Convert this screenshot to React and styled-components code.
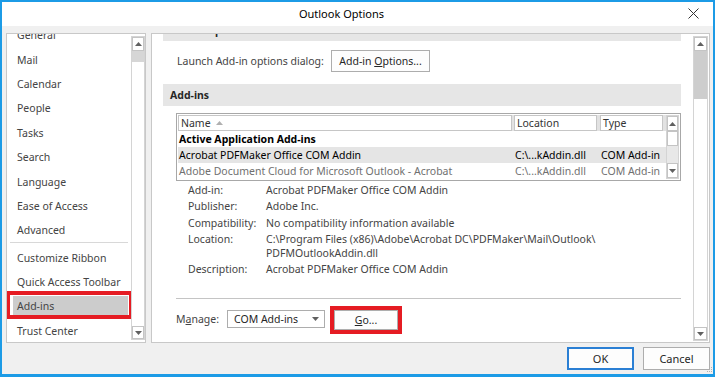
import React from 'react';
import styled, { createGlobalStyle } from 'styled-components';

const FONT = `"Noto Sans", "Segoe UI", sans-serif`;

const GlobalStyle = createGlobalStyle`
  html, body {
    margin: 0;
    padding: 0;
    background: #ffffff;
  }
  body {
    font-family: ${FONT};
    font-size: 10.5px;
    color: #444444;
  }
  * {
    box-sizing: border-box;
  }
`;

const Window = styled.div`
  width: 715px;
  height: 377px;
  border: 2px solid #1c9be6;
  border-bottom-width: 3px;
  background: #f0f0f0;
  display: flex;
  flex-direction: column;
  overflow: hidden;
`;

const TitleBar = styled.div`
  height: 24px;
  flex: none;
  background: #ffffff;
  display: flex;
  align-items: center;
  padding-bottom: 2px;
`;

const Title = styled.div`
  flex: 1;
  text-align: center;
  color: #000000;
  font-size: 11px;
`;

const CloseButton = styled.div`
  width: 32px;
  height: 22px;
  display: flex;
  align-items: center;
  padding-left: 7px;
`;

const Body = styled.div`
  flex: 1;
  display: flex;
  flex-direction: column;
  padding: 7px 0 0 4px;
`;

const Main = styled.div`
  height: 310px;
  margin-right: 3px;
  display: flex;
  gap: 5px;
`;

/* ---------- scrollbars ---------- */

const ScrollBar = styled.div`
  width: ${(p) => p.$w}px;
  flex: none;
  display: flex;
  flex-direction: column;
  background: ${(p) => p.$track};
  border: 1px solid #d4d4d4;
  margin: ${(p) => p.$m};
`;

const ScrollButton = styled.div`
  height: ${(p) => p.$h}px;
  flex: none;
  background: #ffffff;
  border: 1px solid #c4c4c4;
  display: flex;
  align-items: center;
  justify-content: center;
`;

const ScrollThumb = styled.div`
  height: ${(p) => p.$h}px;
  flex: none;
  background: ${(p) => p.$bg};
  border: ${(p) => (p.$bordered ? '1px solid #c4c4c4' : 'none')};
`;

const ScrollSpacer = styled.div`
  flex: 1;
`;

const Arrow = ({ down, color = '#606060' }) => (
  <svg width="7" height="4" viewBox="0 0 7 4">
    <polygon points={down ? '0,0 7,0 3.5,4' : '0,4 7,4 3.5,0'} fill={color} />
  </svg>
);

/* ---------- left navigation ---------- */

const NavPanel = styled.div`
  width: 140px;
  flex: none;
  border: 1px solid #c8c8c8;
  background: #ffffff;
  display: flex;
`;

const NavList = styled.div`
  flex: 1;
  overflow: hidden;
  padding: 0 0 0 1px;
`;

const NavInner = styled.div`
  margin-top: -12.5px;
`;

const NavItem = styled.div`
  height: 24.4px;
  padding: 3px 3px 0 5px;
  display: flex;
  outline: ${(p) => (p.$marked ? '4px solid #e51c23' : 'none')};
  outline-offset: -2px;
`;

const NavLabel = styled.div`
  flex: 1;
  display: flex;
  align-items: center;
  padding-left: 4px;
  color: #444444;
  background: ${(p) => (p.$active ? '#cccccc' : 'transparent')};
`;

const NavSeparator = styled.div`
  height: 1px;
  margin: 1px 3px 1px 2px;
  background: #d8d8d8;
`;

/* ---------- right content ---------- */

const ContentPanel = styled.div`
  flex: 1;
  border: 1px solid #c8c8c8;
  background: #ffffff;
  display: flex;
`;

const Content = styled.div`
  flex: 1;
  overflow: hidden;
  padding: 0 12px 0 11px;
  display: flex;
  flex-direction: column;
`;

const SectionHeader = styled.div`
  height: 22px;
  flex: none;
  background: #e6e6e6;
  display: flex;
  align-items: center;
  padding-left: 7px;
  font-weight: 700;
  color: #262626;
  margin-top: ${(p) => p.$top}px;
`;

const LaunchRow = styled.div`
  margin-top: 9px;
  padding-left: 14px;
  height: 22px;
  display: flex;
  align-items: center;
`;

const Label = styled.span`
  width: ${(p) => p.$w}px;
  flex: none;
`;

const Button = styled.div`
  width: ${(p) => p.$w}px;
  height: ${(p) => p.$h}px;
  flex: none;
  background: #fdfdfd;
  border: ${(p) => (p.$primary ? '2px solid #2a7fd4' : '1px solid #adadad')};
  display: flex;
  align-items: center;
  justify-content: center;
  color: #262626;
  font-size: ${(p) => p.$fs || '10.5px'};
  outline: ${(p) => (p.$marked ? '4px solid #e51c23' : 'none')};
`;

const ListView = styled.div`
  margin: 7px 0 0 13px;
  height: 68px;
  flex: none;
  border: 1px solid #a8a8a8;
  padding: 1px;
  background: #ffffff;
  display: flex;
`;

const ListMain = styled.div`
  flex: 1;
  display: flex;
  flex-direction: column;
`;

const Row = styled.div`
  display: grid;
  grid-template-columns: 336px 86px 65px;
  height: 16px;
  align-items: center;
  background: ${(p) => (p.$selected ? '#e5e5e5' : p.$head ? '#e2e2e2' : 'transparent')};
  color: ${(p) => p.$color || '#000000'};
  font-weight: ${(p) => (p.$bold ? 700 : 400)};
`;

const HeadCell = styled.div`
  height: 16px;
  margin-right: ${(p) => p.$gap}px;
  background: #ffffff;
  border: 1px solid #c6c6c6;
  display: flex;
  align-items: center;
  padding-left: 2px;
  color: #333333;
  gap: 5px;
`;

const Cell = styled.div`
  padding-left: 1px;
  white-space: nowrap;
  overflow: hidden;
`;

const Details = styled.div`
  margin: 2px 0 0 25px;
  display: grid;
  grid-template-columns: 78px 1fr;
  row-gap: 2.3px;
  line-height: 14px;
  color: #444444;
`;

const DetailValue = styled.span`
  white-space: pre-line;
`;

const Divider = styled.div`
  height: 1px;
  flex: none;
  margin: 22px 0 0 13px;
  background: #c4c4c4;
`;

const ManageRow = styled.div`
  margin-top: 11px;
  padding-left: 13px;
  display: flex;
  align-items: flex-start;
`;

const ManageLabel = styled.span`
  width: 51px;
  flex: none;
  line-height: 18px;
`;

const Combo = styled.div`
  width: 98px;
  height: 18px;
  flex: none;
  background: #ffffff;
  border: 1px solid #adadad;
  display: flex;
  align-items: center;
  justify-content: space-between;
  padding: 0 5px 0 6px;
  color: #262626;
`;

const GoWrap = styled.div`
  margin-left: 9px;
`;

/* ---------- footer ---------- */

const Footer = styled.div`
  flex: 1;
  display: flex;
  justify-content: flex-end;
  align-items: flex-start;
  padding-top: 4px;
  gap: 9px;
`;

const Grip = styled.div`
  align-self: flex-end;
  margin-left: -12px;
  margin-bottom: 1px;
  display: flex;
`;

const navTop = ['General', 'Mail', 'Calendar', 'People', 'Tasks', 'Search', 'Language', 'Ease of Access', 'Advanced'];
const navBottom = ['Customize Ribbon', 'Quick Access Toolbar', 'Add-ins', 'Trust Center'];

const details = [
  ['Add-in:', 'Acrobat PDFMaker Office COM Addin'],
  ['Publisher:', 'Adobe Inc.'],
  ['Compatibility:', 'No compatibility information available'],
  ['Location:', 'C:\\Program Files (x86)\\Adobe\\Acrobat DC\\PDFMaker\\Mail\\Outlook\\\nPDFMOutlookAddin.dll'],
  ['Description:', 'Acrobat PDFMaker Office COM Addin'],
];

export default function App() {
  return (
    <>
      <GlobalStyle />
      <Window>
        <TitleBar>
          <Title>Outlook Options</Title>
          <CloseButton>
            <svg width="11" height="11" viewBox="0 0 11 11">
              <path d="M0.5 0.5 L10.5 10.5 M10.5 0.5 L0.5 10.5" stroke="#333" strokeWidth="1" />
            </svg>
          </CloseButton>
        </TitleBar>

        <Body>
          <Main>
            <NavPanel>
              <NavList>
                <NavInner>
                  {navTop.map((n) => (
                    <NavItem key={n}>
                      <NavLabel>{n}</NavLabel>
                    </NavItem>
                  ))}
                  <NavSeparator />
                  {navBottom.map((n) => (
                    <NavItem key={n} $marked={n === 'Add-ins'}>
                      <NavLabel $active={n === 'Add-ins'}>{n}</NavLabel>
                    </NavItem>
                  ))}
                </NavInner>
              </NavList>
              <ScrollBar $w={14} $track="#ffffff" $m="2px 0 2px 0">
                <ScrollButton $h={14}><Arrow /></ScrollButton>
                <ScrollThumb $h={11} $bg="#d6d6d6" />
                <ScrollSpacer />
                <ScrollButton $h={13}><Arrow down /></ScrollButton>
              </ScrollBar>
            </NavPanel>

            <ContentPanel>
              <Content>
                <SectionHeader $top={-15}>Add-in Options</SectionHeader>
                <LaunchRow>
                  <Label $w={154}>Launch Add-in options dialog:</Label>
                  <Button $w={99} $h={22}>Add-in&nbsp;<u>O</u>ptions...</Button>
                </LaunchRow>

                <SectionHeader $top={12}>Add-ins</SectionHeader>

                <ListView>
                  <ListMain>
                    <Row $head>
                      <HeadCell $gap={2}>
                        Name <Arrow color="#b0b0b0" />
                      </HeadCell>
                      <HeadCell $gap={3}>Location</HeadCell>
                      <HeadCell $gap={2}>Type</HeadCell>
                    </Row>
                    <Row $bold>
                      <Cell>Active Application Add-ins</Cell>
                    </Row>
                    <Row $selected>
                      <Cell>Acrobat PDFMaker Office COM Addin</Cell>
                      <Cell>C:\...kAddin.dll</Cell>
                      <Cell>COM Add-in</Cell>
                    </Row>
                    <Row $color="#707070">
                      <Cell>Adobe Document Cloud for Microsoft Outlook - Acrobat</Cell>
                      <Cell>C:\...kAddin.dll</Cell>
                      <Cell>COM Add-in</Cell>
                    </Row>
                  </ListMain>
                  <ScrollBar $w={13} $track="#e8e8e8" $m="0">
                    <ScrollButton $h={15}><Arrow /></ScrollButton>
                    <ScrollThumb $h={15} $bg="#ffffff" $bordered />
                    <ScrollSpacer />
                    <ScrollButton $h={15}><Arrow down /></ScrollButton>
                  </ScrollBar>
                </ListView>

                <Details>
                  {details.map(([k, v]) => (
                    <React.Fragment key={k}>
                      <span>{k}</span>
                      <DetailValue>{v}</DetailValue>
                    </React.Fragment>
                  ))}
                </Details>

                <Divider />

                <ManageRow>
                  <ManageLabel>M<u>a</u>nage:</ManageLabel>
                  <Combo>
                    COM Add-ins
                    <Arrow down />
                  </Combo>
                  <GoWrap>
                    <Button $w={64} $h={20} $marked>
                      <u>G</u>o...
                    </Button>
                  </GoWrap>
                </ManageRow>
              </Content>
              <ScrollBar $w={15} $track="#ffffff" $m="2px 1px 1px 0">
                <ScrollButton $h={14}><Arrow /></ScrollButton>
                <ScrollThumb $h={48} $bg="#cdcdcd" />
                <ScrollSpacer />
                <ScrollButton $h={13}><Arrow down /></ScrollButton>
              </ScrollBar>
            </ContentPanel>
          </Main>

          <Footer>
            <Button $w={67} $h={23} $primary $fs="11px">OK</Button>
            <Button $w={67} $h={23} $fs="11px">Cancel</Button>
            <Grip>
              <svg width="6" height="6" viewBox="0 0 6 6">
                <rect x="4" y="0" width="1" height="1" fill="#b0b0b0" />
                <rect x="2" y="2" width="1" height="1" fill="#b0b0b0" />
                <rect x="4" y="2" width="1" height="1" fill="#b0b0b0" />
                <rect x="0" y="4" width="1" height="1" fill="#b0b0b0" />
                <rect x="2" y="4" width="1" height="1" fill="#b0b0b0" />
                <rect x="4" y="4" width="1" height="1" fill="#b0b0b0" />
              </svg>
            </Grip>
          </Footer>
        </Body>
      </Window>
    </>
  );
}
